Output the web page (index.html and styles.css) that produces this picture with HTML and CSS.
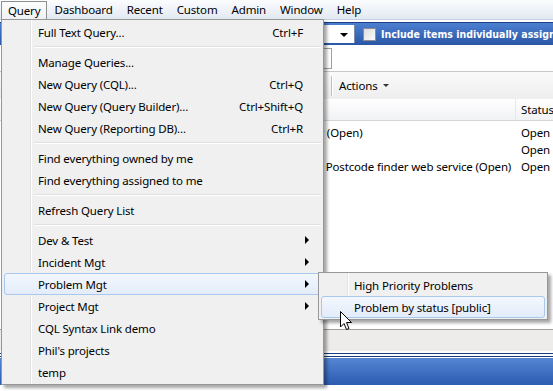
FILE: index.html
```html
<!DOCTYPE html>
<html lang="en">
  <head>
    <meta charset="UTF-8" />
    <title>Query menu</title>
    <link rel="stylesheet" href="styles.css">
  </head>
  <body>
    <div class="menubar">
      <span class="menubar-item pressed">Query</span>
      <span class="menubar-item">Dashboard</span>
      <span class="menubar-item">Recent</span>
      <span class="menubar-item">Custom</span>
      <span class="menubar-item">Admin</span>
      <span class="menubar-item">Window</span>
      <span class="menubar-item">Help</span>
    </div>

    <div class="workspace">
      <div class="bluebar">
        <div class="combo"><span class="combo-arrow"></span></div>
        <span class="checkbox"></span>
        <span class="bluebar-label">Include items individually assigned to me</span>
      </div>

      <div class="search-row">
        <div class="search-box"></div>
      </div>

      <div class="toolbar">
        <span class="toolbar-sep"></span>
        <span class="toolbar-btn">Actions <span class="caret"></span></span>
      </div>

      <div class="grid-header">
        <span class="col-title"></span>
        <span class="col-status">Status</span>
      </div>
      <div class="grid-row">
        <span class="col-title">Problem 1: Network printer (Open)</span>
        <span class="col-status">Open</span>
      </div>
      <div class="grid-row">
        <span class="col-title">Problem 2: Email (Open)</span>
        <span class="col-status">Open</span>
      </div>
      <div class="grid-row">
        <span class="col-title">Problem 3: Implement new Postcode finder web service (Open)</span>
        <span class="col-status">Open</span>
      </div>

      <div class="grid-fill"></div>
      <div class="panel-grey"></div>
      <div class="panel-lines"></div>
      <div class="panel-blue"></div>
    </div>

    <!-- Query drop-down -->
    <div class="menu main-menu">
      <div class="menu-item"><span class="label">Full Text Query...</span><span class="key">Ctrl+F</span></div>
      <div class="menu-sep"></div>
      <div class="menu-item"><span class="label">Manage Queries...</span></div>
      <div class="menu-item"><span class="label">New Query (CQL)...</span><span class="key">Ctrl+Q</span></div>
      <div class="menu-item"><span class="label">New Query (Query Builder)...</span><span class="key">Ctrl+Shift+Q</span></div>
      <div class="menu-item"><span class="label">New Query (Reporting DB)...</span><span class="key">Ctrl+R</span></div>
      <div class="menu-sep"></div>
      <div class="menu-item"><span class="label">Find everything owned by me</span></div>
      <div class="menu-item"><span class="label">Find everything assigned to me</span></div>
      <div class="menu-sep"></div>
      <div class="menu-item"><span class="label">Refresh Query List</span></div>
      <div class="menu-sep"></div>
      <div class="menu-item"><span class="label">Dev &amp; Test</span><span class="sub-arrow"></span></div>
      <div class="menu-item"><span class="label">Incident Mgt</span><span class="sub-arrow"></span></div>
      <div class="menu-item active"><span class="label">Problem Mgt</span><span class="sub-arrow"></span></div>
      <div class="menu-item"><span class="label">Project Mgt</span><span class="sub-arrow"></span></div>
      <div class="menu-item"><span class="label">CQL Syntax Link demo</span></div>
      <div class="menu-item"><span class="label">Phil's projects</span></div>
      <div class="menu-item"><span class="label">temp</span></div>
    </div>

    <!-- Problem Mgt submenu -->
    <div class="menu sub-menu">
      <div class="menu-item"><span class="label">High Priority Problems</span></div>
      <div class="menu-item active"><span class="label">Problem by status [public]</span></div>
    </div>

    <svg class="cursor" width="13" height="20" viewBox="0 0 13 20">
      <path d="M0.5 0.5 L0.5 16 L4 12.5 L6.5 18.5 L9 17.5 L6.5 11.5 L11.5 11.5 Z" fill="#fff" stroke="#000" stroke-width="1" />
    </svg>
  </body>
</html>
```

FILE: styles.css
```css
:root {
  --menu-bg: #f0f0f0;
  --menu-border: #979797;
  --text-color: #000;
  --hl-border: #a8c8ec;
  --blue-top: #4d7fd0;
  --blue-bottom: #2a56a6;
}
body {
  margin: 0;
  width: 553px;
  height: 391px;
  overflow: hidden;
  position: relative;
  background: #fff;
  font-family: "Noto Sans", "Open Sans", sans-serif;
  font-size: 11.5px;
  letter-spacing: -0.15px;
  color: var(--text-color);
}

/* Menu bar */
.menubar {
  height: 19px;
  display: flex;
  align-items: stretch;
  padding-left: 1px;
  background: linear-gradient(#fbfcfe, #e3e9f2);
  border-bottom: 1px solid #c5cfdd;
}
.menubar-item {
  display: flex;
  align-items: center;
  padding: 0 6px;
  border: 1px solid transparent;
  border-bottom: none;
  line-height: 1;
}
.menubar-item.pressed {
  background: linear-gradient(#fdfdfd, #eef1f4);
  border-color: #8e8f8f;
  margin-top: 1px;
}

/* Background application */
.workspace {
  display: flex;
  flex-direction: column;
  height: 371px;
}
.bluebar {
  height: 22px;
  margin-top: 2px;
  display: flex;
  align-items: center;
  padding-left: 320px;
  overflow: hidden;
  background: linear-gradient(var(--blue-top), var(--blue-bottom));
  border-top: 1px solid #1c3f86;
}
.bluebar > * {
  flex-shrink: 0;
}
.combo {
  width: 34px;
  height: 18px;
  background: #fff;
  position: relative;
  border-right: 1px solid #7a8ba8;
}
.combo-arrow {
  position: absolute;
  right: 6px;
  top: 8px;
  border-left: 4px solid transparent;
  border-right: 4px solid transparent;
  border-top: 4px solid #000;
}
.checkbox {
  width: 11px;
  height: 11px;
  margin-left: 8px;
  border: 1px solid #8d8d8d;
  background: linear-gradient(135deg, #dcdcdc, #fafafa);
}
.bluebar-label {
  margin-left: 5px;
  color: #fff;
  font-family: "DejaVu Sans Condensed", "DejaVu Sans", sans-serif;
  font-stretch: condensed;
  font-weight: bold;
  font-size: 10.5px;
  letter-spacing: 0;
  white-space: nowrap;
}
.search-row {
  height: 26px;
  display: flex;
  align-items: center;
}
.search-box {
  width: 130px;
  height: 19px;
  margin-left: 200px;
  border: 1px solid #a0a0a0;
  background: #fff;
}
.toolbar {
  height: 27px;
  display: flex;
  align-items: center;
  padding-left: 331px;
  background: linear-gradient(#fafafa, #eeeeee);
  border-top: 1px solid #c8c8c8;
}
.toolbar-sep {
  width: 1px;
  height: 20px;
  background: #c0c0c0;
  border-right: 1px solid #fff;
}
.toolbar-btn {
  margin-left: 6px;
  display: flex;
  align-items: center;
  gap: 5px;
}
.caret {
  border-left: 3px solid transparent;
  border-right: 3px solid transparent;
  border-top: 3px solid #333;
}
.grid-header,
.grid-row {
  display: flex;
  align-items: center;
  white-space: nowrap;
}
.grid-header {
  height: 21px;
  background: linear-gradient(#ffffff, #f1f2f4);
  border-bottom: 1px solid #d5d5d5;
  margin-bottom: 3px;
}
.grid-row {
  height: 17px;
}
.col-title {
  flex-shrink: 0;
  width: 515px;
  padding-left: 180px;
  box-sizing: border-box;
  overflow: hidden;
}
.col-status {
  padding-left: 6px;
}
.grid-header .col-status {
  border-left: 1px solid #e8e8e8;
  padding-left: 5px;
  height: 21px;
  display: flex;
  align-items: center;
}
.grid-fill {
  flex: 1;
}
.panel-grey {
  height: 21px;
  background: #eeecea;
  border-top: 1px solid #a0a0a0;
}
.panel-lines {
  height: 2px;
  margin-top: 2px;
  border-top: 1px solid #1b3c7a;
  border-bottom: 1px solid #1b3c7a;
}
.panel-blue {
  height: 27px;
  margin-top: 1px;
  background: linear-gradient(#5486d4, #2c5bb0);
  margin-bottom: 6px;
}

/* Menus */
.menu {
  position: absolute;
  box-sizing: border-box;
  background: var(--menu-bg);
  border: 1px solid var(--menu-border);
  padding: 1px 2px 2px;
  box-shadow: 3px 3px 3px rgba(0, 0, 0, 0.35);
  background-image: linear-gradient(90deg, transparent 28px, #e2e3e3 28px, #e2e3e3 29px, #fff 29px, #fff 30px, transparent 30px);
}
.main-menu {
  left: 1px;
  top: 19px;
  width: 323px;
  height: 366px;
}
.sub-menu {
  left: 318px;
  top: 272px;
  width: 230px;
  height: 48px;
}
.menu-item {
  height: 22px;
  display: flex;
  align-items: center;
  padding-left: 33px;
  padding-right: 17px;
  border: 1px solid transparent;
  border-radius: 3px;
  box-sizing: border-box;
  white-space: nowrap;
}
.menu-item .key,
.menu-item .sub-arrow {
  margin-left: auto;
}
.menu-item.active {
  border-color: var(--hl-border);
  background: linear-gradient(#f3f7fd, #e3ecfa);
}
.sub-arrow {
  border-top: 4px solid transparent;
  border-bottom: 4px solid transparent;
  border-left: 4px solid #000;
  margin-right: -6px;
}
.menu-sep {
  height: 1px;
  margin: 3px 0 3px 30px;
  background: #e0e0e0;
  border-bottom: 1px solid #fff;
}
.sub-menu .menu-item {
  padding-left: 32px;
}

.cursor {
  position: absolute;
  left: 340px;
  top: 311px;
}
```
